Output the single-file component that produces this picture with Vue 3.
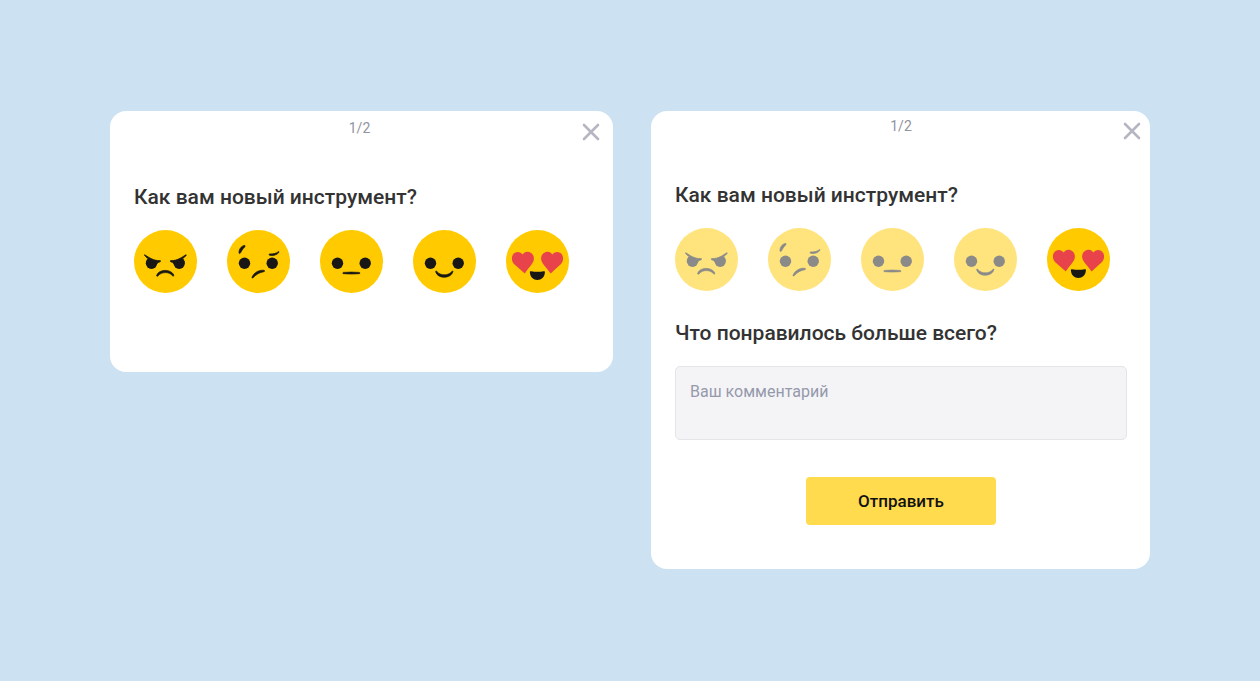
<script setup>
import { ref } from 'vue'

const moods = ['angry', 'confused', 'neutral', 'happy', 'love']
const labels = {
  angry: 'Ужасно',
  confused: 'Плохо',
  neutral: 'Нормально',
  happy: 'Хорошо',
  love: 'Отлично',
}
const cards = [
  { id: 'start', picked: ref(''), form: false },
  { id: 'details', picked: ref('love'), form: true },
]
const comment = ref('')
</script>

<template>
  <main class="page">
    <section v-for="card in cards" :key="card.id" class="card" :class="card.id">
      <header class="top">
        <span class="step">1/2</span>
        <button class="close" type="button" aria-label="Закрыть">
          <svg viewBox="0 0 18 18" width="18" height="18" aria-hidden="true">
            <path d="M2 2 16 16M16 2 2 16" />
          </svg>
        </button>
      </header>

      <form class="body" @submit.prevent>
        <h2 class="title">Как вам новый инструмент?</h2>
        <div class="moods" role="radiogroup" aria-label="Как вам новый инструмент?">
          <label
            v-for="mood in moods"
            :key="mood"
            class="mood"
            :class="{ faded: card.picked.value && card.picked.value !== mood }"
          >
            <input
              v-model="card.picked.value"
              class="radio"
              type="radio"
              :name="card.id"
              :value="mood"
              :aria-label="labels[mood]"
            />
            <svg class="face" viewBox="0 0 63 63" aria-hidden="true">
              <circle class="skin" cx="31.5" cy="31.5" r="31.5" />
              <g v-if="mood !== 'love'" class="ink">
                <circle cx="17.5" cy="33.3" r="5.7" />
                <circle cx="45.2" cy="33.3" r="5.7" />
              </g>
              <template v-if="mood === 'angry'">
                <path class="skin" d="M10 23 13.5 28.5 21 31 24.5 30.5V24ZM53 23 49.2 28.5 42 31 38 30.5V24Z" />
                <path
                  class="ink line"
                  d="M10.8 24.8C15 27.4 20 31 25.8 30.5C26.9 30.5 26.9 31.4 26 31.8C24.8 32.5 23.5 32.6 22.8 34L12.2 32 14.2 28.7C12.4 27.4 11.4 26.5 10.6 25.4C10.3 25 10.4 24.6 10.8 24.8ZM51.8 24.8C47.7 27.4 42.7 31 37 30.5C35.9 30.5 35.9 31.4 36.8 31.8C38 32.5 39.3 32.6 40 34L50.4 32 48.5 28.7C50.3 27.4 51.3 26.5 52.1 25.4C52.4 25 52.2 24.6 51.8 24.8Z"
                />
                <path
                  class="ink line"
                  d="M22.7 45.3C24.6 38.8 37.5 38.8 39.8 45.1C40 46.3 39 46.5 38.3 45.5C35.2 41.6 27.5 41.6 24.2 45.7C23.4 46.7 22.4 46.5 22.7 45.3Z"
                />
              </template>
              <template v-else-if="mood === 'confused'">
                <path
                  class="ink line"
                  d="M17.2 15.4C14 16.2 11.7 19.5 12 22.8C12.1 23.8 13 23.8 13.6 22.8C14.6 20.6 15.7 19.1 17.5 17.2C18.5 16.2 18.1 15.1 17.2 15.4ZM42.7 23.9C46.3 24.2 49.4 23.2 51.4 21.7C52.2 21.3 52.2 21.9 51.8 22.5C50 25 45.8 26 42.7 25.3C41.8 25 41.8 24 42.7 23.9Z"
                />
                <path
                  class="ink line"
                  d="M25 47.2C26.9 42.6 31.8 39.8 36.8 40.3C37.9 40.5 37.9 41.4 36.8 41.7C32.4 42.6 29.6 44 26.4 47.5C25.5 48.4 24.7 48 25 47.2Z"
                />
              </template>
              <path
                v-else-if="mood === 'neutral'"
                class="ink line"
                d="M23.4 42.4Q31.3 41.8 39.3 42.4C40.1 42.5 40.1 43.6 39.3 43.7Q31.3 44.3 23.4 43.7C22.6 43.6 22.6 42.5 23.4 42.4Z"
              />
              <path
                v-else-if="mood === 'happy'"
                class="ink line"
                d="M22.7 41.9C24.6 49 37.5 49 39.9 41.9C40.2 40.9 39.3 40.7 38.6 41.7C35.2 45.9 27.5 45.9 24.1 41.7C23.3 40.7 22.4 40.9 22.7 41.9Z"
              />
              <template v-else>
                <path
                  class="heart"
                  d="M18.8 43.5 8 34C5 30.8 5.2 24.8 9 22.8C12 21.3 15 22.3 16.7 24.6C17.8 22.1 20.5 21.2 23.2 22C27.2 23.2 28.9 27.4 27.3 31.6C26.4 34.3 21.8 38.9 18.8 43.5Z"
                />
                <path
                  class="heart"
                  d="M44.6 43.5 55 34C58 30.8 57.8 24.8 54 22.8C51 21.3 48 22.3 46.3 24.6C45.2 22.1 42.5 21.2 39.8 22C35.8 23.2 34.1 27.4 35.7 31.6C36.6 34.3 41.4 38.9 44.6 43.5Z"
                />
                <path
                  class="ink"
                  d="M25.2 41.2Q31.4 42.4 37.6 41.2C38.7 41 39 41.5 38.9 42.5C38.5 47.2 35.5 50 31.4 50C27.3 50 24.3 47.2 23.9 42.5C23.8 41.5 24.2 41 25.2 41.2Z"
                />
              </template>
            </svg>
          </label>
        </div>

        <template v-if="card.form">
          <label class="title question" for="comment">Что понравилось больше всего?</label>
          <textarea id="comment" v-model="comment" class="comment" placeholder="Ваш комментарий"></textarea>
          <button class="send" type="submit">Отправить</button>
        </template>
      </form>
    </section>
  </main>
</template>

<style>
body {
  margin: 0;
  background: #cce1f2;
}
</style>

<style scoped>
.page {
  display: grid;
  grid-template-columns: 503fr 499fr;
  align-items: start;
  gap: 38px;
  box-sizing: border-box;
  min-height: 100vh;
  padding: 111px 110px;
  background: #cce1f2;
  font-family: Roboto, "Liberation Sans", sans-serif;
  color: #333;
}
.card {
  position: relative;
  box-sizing: border-box;
  padding: 6px 23px 44px 24px;
  border-radius: 16px;
  background: #fff;
}
.start {
  padding-top: 8px;
  padding-right: 28px;
  padding-bottom: 79px;
}
.top {
  text-align: center;
}
.step {
  display: block;
  font-size: 14px;
  line-height: 18px;
  color: #9094a0;
}
.close {
  position: absolute;
  top: 11px;
  right: 9px;
  display: flex;
  padding: 0;
  border: 0;
  background: none;
  cursor: pointer;
}
.start .close {
  top: 12px;
  right: 13px;
}
.close path {
  fill: none;
  stroke: #b5b5c3;
  stroke-width: 2.6;
  stroke-linecap: round;
}
.body {
  display: flex;
  flex-direction: column;
  margin-top: 45px;
}
.title {
  margin: 0;
  font-size: 21px;
  line-height: 30px;
  font-weight: 500;
}
.moods {
  display: flex;
  gap: 30px;
  margin-top: 18px;
}
.mood {
  position: relative;
  width: 63px;
  height: 63px;
  cursor: pointer;
}
.faded {
  opacity: 0.5;
}
.radio {
  position: absolute;
  inset: 0;
  width: 100%;
  height: 100%;
  margin: 0;
  opacity: 0;
  cursor: pointer;
}
.face {
  display: block;
  width: 100%;
  height: 100%;
}
.skin {
  fill: #ffcb00;
}
.ink {
  fill: #181716;
}
.line {
  stroke: #181716;
  stroke-width: 0.7;
  stroke-linejoin: round;
}
.heart {
  fill: #e8434b;
}
.question {
  margin-top: 27px;
}
.comment {
  box-sizing: border-box;
  width: 100%;
  height: 74px;
  margin: 18px 0 0;
  padding: 14px;
  border: 1px solid #e4e4e9;
  border-radius: 5px;
  background: #f4f4f7;
  font: 16px/22px Roboto, "Liberation Sans", sans-serif;
  color: #333;
  resize: none;
}
.comment::placeholder {
  color: #9599aa;
  opacity: 1;
}
.send {
  align-self: center;
  width: 190px;
  height: 48px;
  margin-top: 37px;
  padding: 0;
  border: 0;
  border-radius: 4px;
  background: #ffdb4d;
  font: 500 17px/24px Roboto, "Liberation Sans", sans-serif;
  color: #111;
  cursor: pointer;
}
</style>
